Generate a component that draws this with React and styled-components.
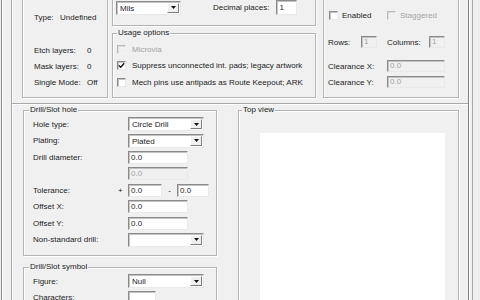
import React from "react";
import styled, { createGlobalStyle } from "styled-components";

const GlobalStyle = createGlobalStyle`
  html, body { margin: 0; padding: 0; background: #f0f0f0; }
  body {
    font-family: "Liberation Sans", Arial, sans-serif;
    font-size: 8px;
    color: #1c1c1c;
  }
`;

const Window = styled.div`
  width: 480px;
  height: 300px;
  overflow: hidden;
  display: flex;
  background: #f0f0f0;
`;

const Frame = styled.div`
  margin-left: 1px;
  padding: 0 3px 0 9px;
  border-left: 1px solid #8a8a8a;
  border-right: 1px solid #a9a9a9;
  box-shadow: inset 1px 0 0 #ffffff;
  display: flex;
`;

const Page = styled.div`
  width: 456px;
  border-left: 1px solid #a9a9a9;
  border-right: 1px solid #7e7e7e;
  box-shadow: inset 1px 0 0 #ffffff, 1px 0 0 #ffffff;
  display: flex;
  flex-direction: column;
`;

const TopRow = styled.div`
  display: flex;
  align-items: flex-start;
  margin-top: -12px;
  padding-left: 10px;
`;

const Column = styled.div`
  display: flex;
  flex-direction: column;
  margin-left: ${(p) => p.$ml || 0}px;
`;

const Box = styled.div`
  box-sizing: border-box;
  width: ${(p) => p.$w}px;
  height: ${(p) => (p.$h ? `${p.$h}px` : "auto")};
  margin-left: ${(p) => p.$ml || 0}px;
  margin-top: ${(p) => p.$mt || 0}px;
  padding: ${(p) => p.$pad || 0};
  border: 1px solid #b4b4b4;
  box-shadow: inset 1px 1px 0 #ffffff, 1px 1px 0 #ffffff;
`;

const Legend = styled.div`
  display: table;
  margin: -6px 0 0 ${(p) => p.$ml}px;
  padding: 0 1px;
  line-height: 10px;
  background: #f0f0f0;
`;

const InfoRow = styled.div`
  display: flex;
  height: 16px;
  align-items: center;
`;

const InfoLabel = styled.span`
  width: ${(p) => p.$w}px;
`;

const Spacer = styled.div`
  height: ${(p) => p.$h}px;
`;

const Line = styled.div`
  display: flex;
  align-items: center;
  height: ${(p) => p.$h || 16}px;
  margin-top: ${(p) => p.$mt || 0}px;
`;

const Cell = styled.div`
  display: flex;
  align-items: center;
  gap: ${(p) => p.$gap || 0}px;
  width: ${(p) => (p.$w ? `${p.$w}px` : "auto")};
  flex: none;
`;

const Text = styled.span`
  color: ${(p) => (p.$disabled ? "#a3a3a3" : "inherit")};
  margin-left: ${(p) => p.$ml || 0}px;
  width: ${(p) => (p.$w ? `${p.$w}px` : "auto")};
  white-space: nowrap;
`;

const TextBox = styled.div`
  box-sizing: border-box;
  width: ${(p) => p.$w}px;
  height: ${(p) => p.$h || 13}px;
  margin-left: ${(p) => p.$ml || 0}px;
  padding-left: 2px;
  line-height: ${(p) => (p.$h || 13) - 2}px;
  background: ${(p) => (p.$disabled ? "#f0f0f0" : "#ffffff")};
  color: ${(p) => (p.$disabled ? "#a3a3a3" : "#1c1c1c")};
  border: 1px solid;
  border-color: #8a8a8a #e9e9e9 #e9e9e9 #8a8a8a;
  box-shadow: inset 1px 1px 0 #c2c2c2;
  flex: none;
`;

const SelectBox = styled.div`
  box-sizing: border-box;
  display: flex;
  width: ${(p) => p.$w}px;
  height: 14px;
  padding: 1px 1px 1px 3px;
  background: #ffffff;
  border: 1px solid;
  border-color: #8a8a8a #e9e9e9 #e9e9e9 #8a8a8a;
  box-shadow: inset 1px 1px 0 #c2c2c2;
  flex: none;
`;

const SelectValue = styled.span`
  flex: 1;
  line-height: 10px;
  padding-top: 1px;
`;

const ArrowButton = styled.span`
  box-sizing: border-box;
  width: 12px;
  display: flex;
  align-items: center;
  justify-content: center;
  background: #f0f0f0;
  border: 1px solid;
  border-color: #ffffff #7c7c7c #7c7c7c #ffffff;
`;

const CheckBox = styled.span`
  box-sizing: border-box;
  width: 9px;
  height: 9px;
  margin-left: ${(p) => p.$ml || 0}px;
  background: ${(p) => (p.$disabled ? "#f0f0f0" : "#ffffff")};
  border: 1px solid;
  border-color: ${(p) =>
    p.$disabled ? "#b9b9b9 #f4f4f4 #f4f4f4 #b9b9b9" : "#8a8a8a #e9e9e9 #e9e9e9 #8a8a8a"};
  box-shadow: inset 1px 1px 0 ${(p) => (p.$disabled ? "#dcdcdc" : "#c2c2c2")};
  display: flex;
  align-items: center;
  justify-content: center;
  flex: none;
`;

const UsageList = styled.div`
  display: grid;
  grid-template-rows: 16px 17px 16px;
  align-items: center;
  margin-top: 3px;
  padding-left: 4px;
`;

const Option = styled.div`
  display: flex;
  align-items: center;
  gap: 6px;
`;

const LowerPanel = styled.div`
  flex: 1;
  display: flex;
  align-items: flex-start;
  margin-top: 5px;
  padding-left: 11px;
  border-top: 1px solid #a9a9a9;
  box-shadow: inset 0 1px 0 #ffffff;
`;

const FieldGrid = styled.div`
  display: grid;
  grid-template-columns: 81px 14px auto;
  grid-auto-rows: 16.5px;
  align-items: center;
  margin-top: 1px;
  padding-left: 9px;
`;

const Sign = styled.span`
  padding-left: 4px;
`;

const Dash = styled.span`
  width: 15px;
  text-align: center;
`;

const Controls = styled.div`
  display: flex;
  align-items: center;
`;

const Canvas = styled.div`
  width: 185px;
  height: 200px;
  margin: 18px 0 0 21px;
  background: #ffffff;
`;

function Arrow() {
  return (
    <svg width="5" height="3" viewBox="0 0 5 3">
      <path d="M0 0H5L2.5 3Z" fill="#111" />
    </svg>
  );
}

function Dropdown({ w, value }) {
  return (
    <SelectBox $w={w}>
      <SelectValue>{value}</SelectValue>
      <ArrowButton>
        <Arrow />
      </ArrowButton>
    </SelectBox>
  );
}

function Check({ checked, disabled, ml }) {
  return (
    <CheckBox $disabled={disabled} $ml={ml}>
      {checked && (
        <svg width="7" height="7" viewBox="0 0 7 7">
          <path d="M0.8 3.4L2.7 5.3L6.2 1.3" fill="none" stroke="#111" strokeWidth="1.3" />
        </svg>
      )}
    </CheckBox>
  );
}

function Field({ label, sign, children }) {
  return (
    <>
      <span>{label}</span>
      <Sign>{sign}</Sign>
      <Controls>{children}</Controls>
    </>
  );
}

export default function App() {
  return (
    <Window>
      <GlobalStyle />
      <Frame>
        <Page>
          <TopRow>
            <Box $w={86} $h={110} $pad="20px 0 0 11px">
              <InfoRow>
                <InfoLabel $w={26}>Type:</InfoLabel>
                <span>Undefined</span>
              </InfoRow>
              <Spacer $h={17} />
              <InfoRow>
                <InfoLabel $w={53}>Etch layers:</InfoLabel>
                <span>0</span>
              </InfoRow>
              <InfoRow>
                <InfoLabel $w={53}>Mask layers:</InfoLabel>
                <span>0</span>
              </InfoRow>
              <InfoRow>
                <InfoLabel $w={53}>Single Mode:</InfoLabel>
                <span>Off</span>
              </InfoRow>
            </Box>

            <Column $ml={4}>
              <Box $w={204} $h={38} $pad="11px 0 0 3px">
                <Line $h={15}>
                  <Dropdown w={65} value="Mils" />
                  <Text $ml={32}>Decimal places:</Text>
                  <TextBox $w={21} $h={15} $ml={7}>1</TextBox>
                </Line>
              </Box>
              <Box $w={204} $h={65} $mt={7}>
                <Legend $ml={4}>Usage options</Legend>
                <UsageList>
                  <Option>
                    <Check disabled />
                    <Text $disabled>Microvia</Text>
                  </Option>
                  <Option>
                    <Check checked />
                    <Text>Suppress unconnected int. pads; legacy artwork</Text>
                  </Option>
                  <Option>
                    <Check />
                    <Text>Mech pins use antipads as Route Keepout; ARK</Text>
                  </Option>
                </UsageList>
              </Box>
            </Column>

            <Box $w={136} $h={110} $ml={7} $pad="18px 0 0 4px">
              <Line>
                <Cell $w={59} $gap={4}>
                  <Check ml={1} />
                  <Text>Enabled</Text>
                </Cell>
                <Cell $gap={4}>
                  <Check disabled />
                  <Text $disabled>Staggered</Text>
                </Cell>
              </Line>
              <Line $mt={11}>
                <Cell $w={59}>
                  <Text $w={33}>Rows:</Text>
                  <TextBox $w={16} $h={12} $disabled>1</TextBox>
                </Cell>
                <Cell>
                  <Text $w={42}>Columns:</Text>
                  <TextBox $w={16} $h={12} $disabled>1</TextBox>
                </Cell>
              </Line>
              <Line $mt={8}>
                <Text $w={59}>Clearance X:</Text>
                <TextBox $w={58} $h={12} $disabled>0.0</TextBox>
              </Line>
              <Line>
                <Text $w={59}>Clearance Y:</Text>
                <TextBox $w={58} $h={12} $disabled>0.0</TextBox>
              </Line>
            </Box>
          </TopRow>

          <LowerPanel>
            <Column>
              <Box $w={194} $mt={6} $pad="0 0 7px 0">
                <Legend $ml={5}>Drill/Slot hole</Legend>
                <FieldGrid>
                  <Field label="Hole type:">
                    <Dropdown w={76} value="Circle Drill" />
                  </Field>
                  <Field label="Plating:">
                    <Dropdown w={76} value="Plated" />
                  </Field>
                  <Field label="Drill diameter:">
                    <TextBox $w={60}>0.0</TextBox>
                  </Field>
                  <Field label="">
                    <TextBox $w={60} $disabled>0.0</TextBox>
                  </Field>
                  <Field label="Tolerance:" sign="+">
                    <TextBox $w={34}>0.0</TextBox>
                    <Dash>-</Dash>
                    <TextBox $w={32}>0.0</TextBox>
                  </Field>
                  <Field label="Offset X:">
                    <TextBox $w={60}>0.0</TextBox>
                  </Field>
                  <Field label="Offset Y:">
                    <TextBox $w={60}>0.0</TextBox>
                  </Field>
                  <Field label="Non-standard drill:">
                    <Dropdown w={76} value="" />
                  </Field>
                </FieldGrid>
              </Box>
              <Box $w={194} $mt={11} $pad="0 0 7px 0">
                <Legend $ml={5}>Drill/Slot symbol</Legend>
                <FieldGrid>
                  <Field label="Figure:">
                    <Dropdown w={76} value="Null" />
                  </Field>
                  <Field label="Characters:">
                    <TextBox $w={28} />
                  </Field>
                </FieldGrid>
              </Box>
            </Column>

            <Box $w={221} $h={260} $ml={21} $mt={6}>
              <Legend $ml={3}>Top view</Legend>
              <Canvas />
            </Box>
          </LowerPanel>
        </Page>
      </Frame>
    </Window>
  );
}
